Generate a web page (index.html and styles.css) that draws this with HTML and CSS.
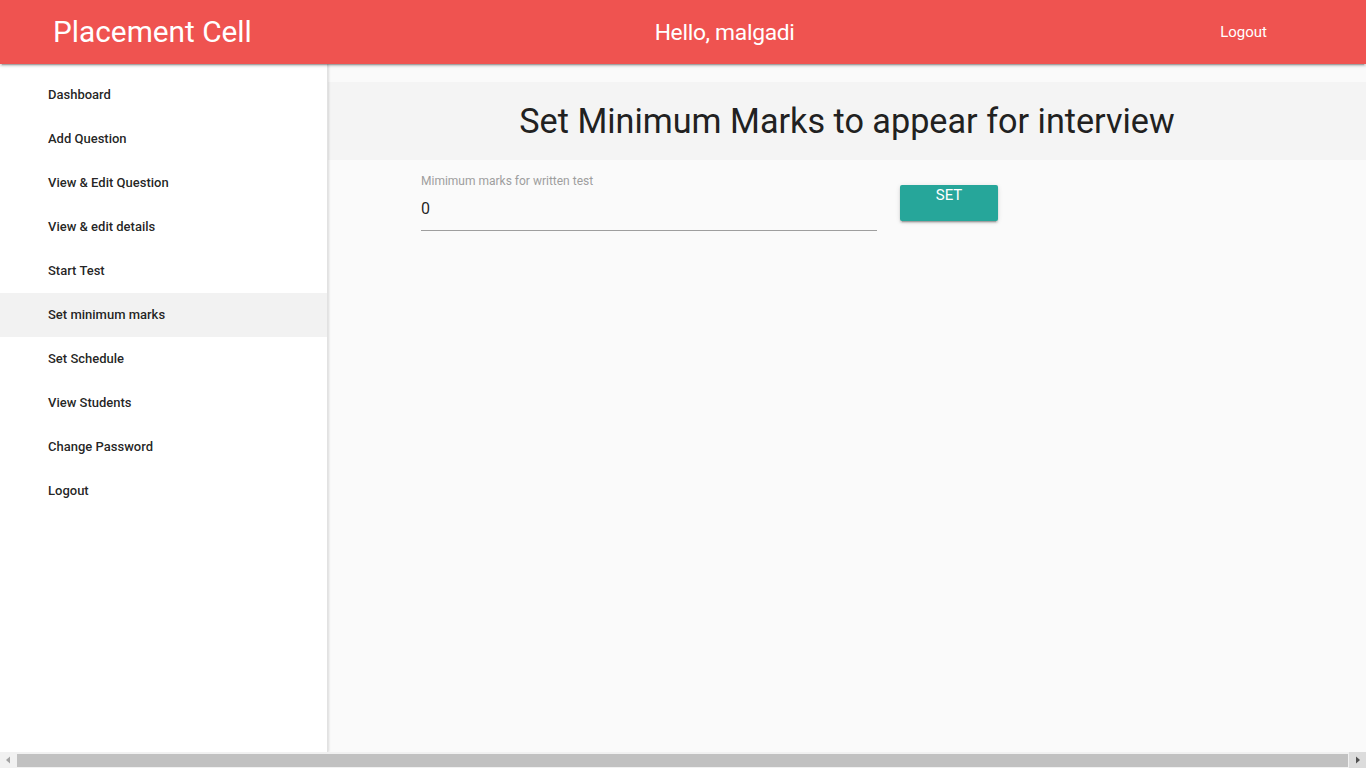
FILE: index.html
```html
<!DOCTYPE html>
<html>
<head>
<meta charset="utf-8">
<link rel="stylesheet" href="styles.css">
</head>
<body>
<div class="page">
  <header class="topbar">
    <div class="brand">Placement Cell</div>
    <div class="hello">Hello, malgadi</div>
    <div class="logout">Logout</div>
  </header>
  <div class="layout">
    <nav class="sidenav">
      <a class="nav-item">Dashboard</a>
      <a class="nav-item">Add Question</a>
      <a class="nav-item">View &amp; Edit Question</a>
      <a class="nav-item">View &amp; edit details</a>
      <a class="nav-item">Start Test</a>
      <a class="nav-item active">Set minimum marks</a>
      <a class="nav-item">Set Schedule</a>
      <a class="nav-item">View Students</a>
      <a class="nav-item">Change Password</a>
      <a class="nav-item">Logout</a>
    </nav>
    <main class="content">
      <div class="title-box">
        <h1 class="title">Set Minimum Marks to appear for interview</h1>
      </div>
      <div class="form-row">
        <div class="field">
          <label class="field-label">Mimimum marks for written test</label>
          <div class="field-input">0</div>
        </div>
        <button class="btn">SET</button>
      </div>
    </main>
  </div>
  <div class="hscroll">
    <div class="arrow arrow-left"><svg width="17" height="16" viewBox="0 0 17 16"><path d="M6 8 L10 4.5 L10 11.5 Z" fill="#a3a3a3"/></svg></div>
    <div class="thumb"></div>
    <div class="arrow arrow-right"><svg width="17" height="16" viewBox="0 0 17 16"><path d="M11 8 L7 4.5 L7 11.5 Z" fill="#505050"/></svg></div>
  </div>
</div>
</body>
</html>
```
FILE: styles.css
```css
html, body {
  margin: 0;
  padding: 0;
}
body {
  font-family: Roboto, "Liberation Sans", sans-serif;
  background: #fafafa;
  color: rgba(0,0,0,0.87);
}
.page {
  width: 1366px;
  height: 768px;
  display: flex;
  flex-direction: column;
  overflow: hidden;
}
.topbar {
  height: 64px;
  flex: none;
  background: #ef5350;
  color: #fff;
  display: flex;
  align-items: center;
  position: relative;
  z-index: 3;
  box-shadow: 0 2px 2px 0 rgba(0,0,0,0.14), 0 1px 5px 0 rgba(0,0,0,0.12), 0 3px 1px -2px rgba(0,0,0,0.2);
}
.brand {
  font-size: 29.8px;
  margin-left: 53px;
  width: 500px;
  line-height: 64px;
}
.hello {
  font-size: 22.8px;
  flex: 1;
  text-align: center;
  margin-left: -84px;
  letter-spacing: -0.3px;
}
.logout {
  font-size: 15px;
  margin-right: 99px;
  margin-left: 240px;
}
.layout {
  flex: 1;
  display: flex;
  min-height: 0;
}
.sidenav {
  width: 327px;
  flex: none;
  background: #fff;
  padding-top: 9px;
  border-right: 1px solid #e2e2e2;
  box-shadow: 1px 0 2px rgba(0,0,0,0.12);
  position: relative;
  z-index: 2;
  display: flex;
  flex-direction: column;
}
.nav-item {
  height: 44px;
  line-height: 44px;
  padding-left: 48px;
  font-size: 13px;
  font-weight: 500;
  color: rgba(0,0,0,0.87);
}
.nav-item.active {
  background: #f2f2f2;
}
.content {
  flex: 1;
  padding-top: 18px;
  background: #fafafa;
}
.title-box {
  background: #f4f4f4;
  height: 78px;
  display: flex;
  align-items: center;
  justify-content: center;
}
.title {
  margin: 0;
  font-weight: 400;
  font-size: 34.2px;
  color: #212121;
}
.form-row {
  display: flex;
  padding-left: 93px;
  padding-top: 13px;
}
.field {
  width: 456px;
}
.field-label {
  display: block;
  font-size: 12px;
  color: #9e9e9e;
  line-height: 16px;
}
.field-input {
  font-size: 16px;
  height: 41px;
  line-height: 40px;
  border-bottom: 1px solid #9e9e9e;
  color: rgba(0,0,0,0.87);
}
.btn {
  margin-left: 23px;
  margin-top: 12px;
  width: 98px;
  height: 36px;
  border: none;
  border-radius: 2px;
  background: #26a69a;
  color: #fff;
  font-family: Roboto, "Liberation Sans", sans-serif;
  font-size: 15px;
  padding: 0;
  display: flex;
  justify-content: center;
  align-items: flex-start;
  padding-top: 1px;
  box-shadow: 0 2px 2px 0 rgba(0,0,0,0.14), 0 1px 5px 0 rgba(0,0,0,0.12), 0 3px 1px -2px rgba(0,0,0,0.2);
}
.hscroll {
  height: 16px;
  flex: none;
  background: #f1f1f1;
  display: flex;
  align-items: center;
  position: relative;
  z-index: 4;
}
.arrow {
  width: 17px;
  height: 16px;
  flex: none;
}
.arrow-right {
  background: #dcdcdc;
}
.thumb {
  flex: 1;
  height: 13px;
  background: #c1c1c1;
  margin-right: 1px;
}
```
